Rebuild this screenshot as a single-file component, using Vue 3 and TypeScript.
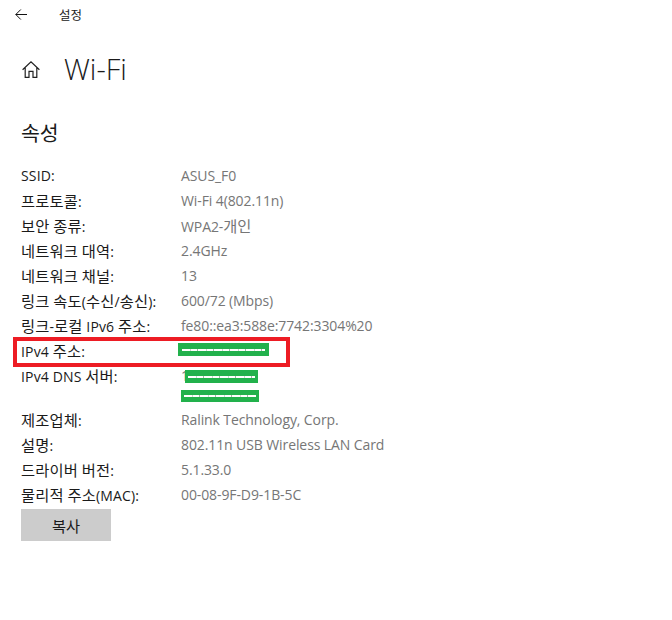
<script setup lang="ts">
interface Mask {
  left: number
  top: number
  width: number
  height: number
}

interface PropRow {
  label: string
  values: string[]
  masks?: Mask[]
  highlight?: boolean
}

const rows: PropRow[] = [
  { label: 'SSID:', values: ['ASUS_F0'] },
  { label: '프로토콜:', values: ['Wi-Fi 4(802.11n)'] },
  { label: '보안 종류:', values: ['WPA2-개인'] },
  { label: '네트워크 대역:', values: ['2.4GHz'] },
  { label: '네트워크 채널:', values: ['13'] },
  { label: '링크 속도(수신/송신):', values: ['600/72 (Mbps)'] },
  { label: '링크-로컬 IPv6 주소:', values: ['fe80::ea3:588e:7742:3304%20'] },
  {
    label: 'IPv4 주소:',
    values: [''],
    highlight: true,
    masks: [{ left: -3, top: 2, width: 91, height: 13 }]
  },
  {
    // the addresses are scribbled out in the screenshot, only the leading 1 shows
    label: 'IPv4 DNS 서버:',
    values: ['1', ''],
    masks: [
      { left: 4, top: 4, width: 73, height: 13 },
      { left: 0, top: 24, width: 78, height: 12 }
    ]
  },
  { label: '제조업체:', values: ['Ralink Technology, Corp.'] },
  { label: '설명:', values: ['802.11n USB Wireless LAN Card'] },
  { label: '드라이버 버전:', values: ['5.1.33.0'] },
  { label: '물리적 주소(MAC):', values: ['00-08-9F-D9-1B-5C'] }
]

// hangul runs are set slightly larger than latin, as in the system font
function segments(text: string) {
  return (text.match(/[\uac00-\ud7a3]+|[^\uac00-\ud7a3]+/g) || []).map((part) => ({
    text: part,
    hangul: /[\uac00-\ud7a3]/.test(part)
  }))
}
</script>

<template>
  <div class="settings">
    <div class="titlebar">
      <svg class="back-icon" viewBox="0 0 12 11" fill="none" stroke="#111" stroke-width="1">
        <path d="M0.8 5.5H12M5.8 0.5L0.8 5.5L5.8 10.5" />
      </svg>
      <span class="titlebar-text">설정</span>
    </div>

    <div class="page-head">
      <svg class="home-icon" viewBox="0 0 18 17" fill="none" stroke="#222" stroke-width="1.2">
        <path d="M0.6 8.8L9 0.9L17.4 8.8M3.2 6.4V16.4H7V10.4H11V16.4H14.8V6.4" />
      </svg>
      <h1 class="page-title">Wi-Fi</h1>
    </div>

    <h2 class="section-title">속성</h2>

    <div class="prop-list">
      <div v-for="row in rows" :key="row.label" class="prop-row">
        <div v-if="row.highlight" class="red-box"></div>
        <span class="prop-label">
          <span v-for="(seg, i) in segments(row.label)" :key="i" :class="{ hangul: seg.hangul }">{{ seg.text }}</span>
        </span>
        <div class="prop-values">
          <span v-for="(value, vi) in row.values" :key="vi" class="prop-value">
            <span v-for="(seg, i) in segments(value)" :key="i" :class="{ hangul: seg.hangul }">{{ seg.text }}</span>
          </span>
          <span
            v-for="mask in row.masks"
            :key="mask.top"
            class="mask"
            :style="{ left: mask.left + 'px', top: mask.top + 'px', width: mask.width + 'px', height: mask.height + 'px' }"
          >
            <i class="scribble"></i>
          </span>
        </div>
      </div>
    </div>

    <button class="copy-btn"><span class="hangul">복사</span></button>
  </div>
</template>

<style>
html, body {
  background: #fff;
}
</style>

<style scoped>
.settings {
  width: 672px;
  height: 620px;
  box-sizing: border-box;
  padding: 0 21px;
  background: #fff;
  color: #1a1a1a;
  font-family: 'Open Sans', 'Noto Sans CJK KR', sans-serif;
  font-size: 14px;
  overflow: hidden;
}

.hangul {
  font-size: 15.3px;
}

.titlebar {
  display: flex;
  align-items: center;
  height: 29px;
  margin-left: -6px;
}

.back-icon {
  width: 12px;
  height: 11px;
  flex-shrink: 0;
}

.titlebar-text {
  margin-left: 32px;
  font-size: 12.5px;
  color: #222;
}

.page-head {
  display: flex;
  align-items: center;
  height: 40px;
  margin-top: 20px;
}

.home-icon {
  width: 18px;
  height: 17px;
  margin-left: 1px;
  flex-shrink: 0;
}

.page-title {
  margin: 0 0 0 24px;
  font-size: 29px;
  font-weight: 300;
  line-height: 40px;
  color: #1a1a1a;
}

.section-title {
  margin: 29px 0 0;
  font-size: 20.5px;
  font-weight: 400;
  line-height: 30px;
  color: #1a1a1a;
}

.prop-list {
  margin-top: 18px;
}

.prop-row {
  position: relative;
  display: flex;
  padding-bottom: 5px;
}

.prop-label {
  width: 160px;
  flex-shrink: 0;
  height: 20px;
  line-height: 20px;
  letter-spacing: 0.15px;
  white-space: nowrap;
}

.prop-values {
  position: relative;
  display: flex;
  flex-direction: column;
}

.prop-value {
  height: 20px;
  line-height: 20px;
  color: #767676;
  letter-spacing: -0.1px;
  white-space: nowrap;
}

.prop-value + .prop-value {
  margin-bottom: -1px;
}

.red-box {
  position: absolute;
  left: -8px;
  top: -4px;
  width: 277px;
  height: 30px;
  box-sizing: border-box;
  border: 4px solid #ed1c24;
}

.mask {
  position: absolute;
  background: #22b14c;
  display: flex;
  align-items: center;
}

.scribble {
  display: block;
  width: 92%;
  height: 2px;
  margin: 0 auto;
  background: repeating-linear-gradient(90deg, #fff 0 8px, #c8d8cc 8px 9px, #fff 9px 15px, #9fb5a6 15px 16px);
}

.copy-btn {
  display: block;
  width: 90px;
  height: 32px;
  margin-top: -1px;
  padding: 0;
  border: none;
  background: #cccccc;
  color: #1a1a1a;
  font: inherit;
}
</style>
